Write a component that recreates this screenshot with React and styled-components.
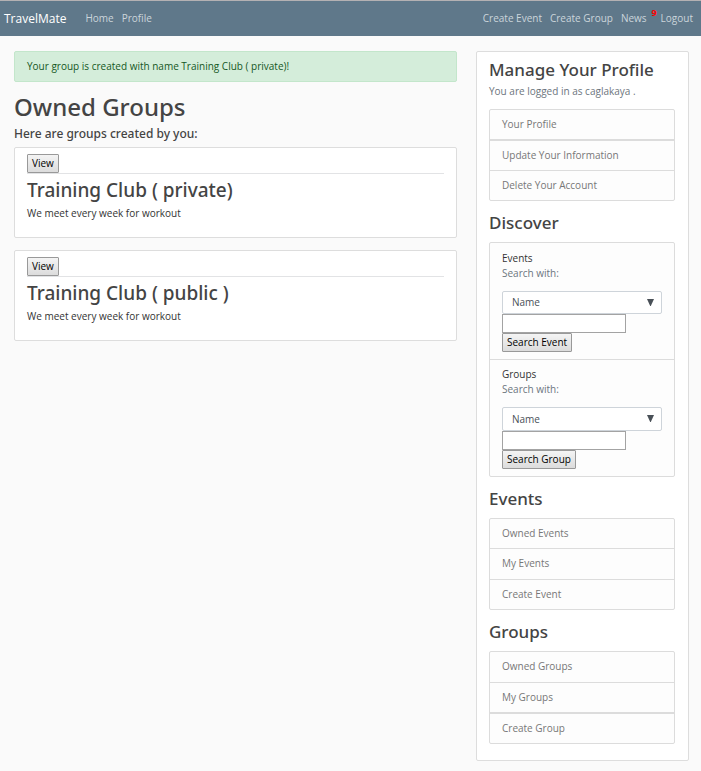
import React from "react";
import styled, { createGlobalStyle } from "styled-components";

const Global = createGlobalStyle`
  *, *::before, *::after { box-sizing: border-box; }
  body {
    margin: 0;
    background: #fafafa;
    color: #333;
    font-family: "Open Sans", "Noto Sans", sans-serif;
    font-size: 10px;
    line-height: 15px;
  }
  h1, h2, h3, p, ul { margin: 0; padding: 0; }
  h1, h2, h3 {
    color: #444;
    font-family: "Noto Sans", "Open Sans", sans-serif;
    font-weight: 500;
  }
  ul { list-style: none; }
  button, input, select { font: inherit; }
`;

const Navbar = styled.nav`
  display: flex;
  align-items: center;
  height: 36px;
  padding: 0 8px 0 4px;
  background: #5f788a;
  border-top: 1px solid #b4b1b3;
`;

const Brand = styled.a`
  margin-right: 19px;
  color: #fff;
  font-size: 12px;
  line-height: 18px;
  text-decoration: none;
`;

const NavGroup = styled.div`
  display: flex;
  gap: 8px;
  margin-left: ${(p) => (p.$end ? "auto" : "0")};
`;

const NavLink = styled.a`
  position: relative;
  color: #cbd5db;
  text-decoration: none;
  margin-right: ${(p) => (p.$badged ? "6px" : "0")};
`;

const Badge = styled.sup`
  position: absolute;
  top: -3px;
  right: -10px;
  color: #f00;
  font-size: 9px;
  font-weight: 700;
  line-height: 10px;
`;

const Page = styled.main`
  display: grid;
  grid-template-columns: minmax(0, 443fr) minmax(0, 213fr);
  gap: 19px;
  align-items: start;
  padding: 15px 12px 10px 14px;
`;

const Alert = styled.div`
  padding: 7px 12px;
  border: 1px solid #c3e6cb;
  border-radius: 2px;
  background: #d4edda;
  color: #155724;
`;

const PageTitle = styled.h1`
  margin-top: 9px;
  font-size: 24px;
  line-height: 32px;
`;

const Lead = styled.h3`
  margin: 3px 0 5px;
  font-size: 12px;
  line-height: 16px;
`;

const Card = styled.article`
  margin-bottom: 12px;
  padding: 6px 12px 16px;
  border: 1px solid #ddd;
  border-radius: 2px;
  background: #fff;
`;

const CardHead = styled.div`
  display: flex;
  border-bottom: 1px solid #e2e3e5;
`;

const Button = styled.button`
  height: 19px;
  padding: 0 4px;
  border: 1px solid #999;
  border-radius: 1px;
  background: linear-gradient(#f4f4f4, #dcdcdc);
  color: #000;
  line-height: 15px;
`;

const CardTitle = styled.h2`
  margin: 4px 0;
  font-size: 19px;
  line-height: 24px;
`;

const Sidebar = styled.aside`
  padding: 7px 13px 16px 12px;
  border: 1px solid #ddd;
  border-radius: 2px;
  background: #fff;
`;

const SideTitle = styled.h2`
  margin-top: ${(p) => (p.$first ? "0" : "11px")};
  margin-bottom: ${(p) => (p.$first ? "4px" : "9px")};
  font-size: 17px;
  line-height: 21px;
`;

const Muted = styled.p`
  color: #6c757d;
`;

const List = styled.ul`
  border: 1px solid #dcdcdc;
  border-radius: 2px;
  background: #fdfdfd;
  margin-top: ${(p) => (p.$spaced ? "10px" : "0")};
`;

const Item = styled.li`
  border-top: ${(p) => (p.$thick ? "2px" : "1px")} solid #dcdcdc;
  &:first-child { border-top: 0; }
`;

const ItemLink = styled.a`
  display: block;
  padding: 7px 12px ${(p) => (p.$tall ? "8px" : "7px")};
  color: #777;
  text-decoration: none;
`;

const SearchForm = styled.form`
  display: flex;
  flex-direction: column;
  align-items: flex-start;
  padding: ${(p) => (p.$tall ? "7px" : "8px")} 12px 7px;
`;

const SearchLabel = styled.label`
  margin-bottom: 10px;
  color: #6c757d;
`;

const SelectWrap = styled.div`
  position: relative;
  width: 100%;
  svg {
    position: absolute;
    right: 7px;
    top: 7px;
    pointer-events: none;
  }
`;

const Select = styled.select`
  appearance: none;
  display: block;
  width: 100%;
  height: ${(p) => (p.$tall ? "24px" : "23px")};
  padding: 0 9px;
  border: 1px solid #ced4da;
  border-radius: 2px;
  background: #fff;
  color: #495057;
`;

const TextInput = styled.input`
  width: 124px;
  max-width: 100%;
  height: 19px;
  padding: 0 3px;
  border: 1px solid #a3a3a3;
  border-radius: 0;
  background: #fff;
`;

function Search({ title, id, action, tall }) {
  return (
    <Item>
      <SearchForm $tall={tall} onSubmit={(e) => e.preventDefault()}>
        <p>{title}</p>
        <SearchLabel htmlFor={id}>Search with:</SearchLabel>
        <SelectWrap>
          <Select id={id} $tall={tall}>
            <option>Name</option>
          </Select>
          <svg width="9" height="9" viewBox="0 0 9 9" aria-hidden="true">
            <path d="M1 1h7L4.8 8h-.6z" fill="#495057" />
          </svg>
        </SelectWrap>
        <TextInput type="text" aria-label={action} />
        <Button type="submit">{action}</Button>
      </SearchForm>
    </Item>
  );
}

function LinkList({ items, spaced }) {
  return (
    <List $spaced={spaced}>
      {items.map((item) => (
        <Item key={item.text} $thick={item.thick}>
          <ItemLink href="#" $tall={item.tall}>{item.text}</ItemLink>
        </Item>
      ))}
    </List>
  );
}

const groups = ["Training Club ( private)", "Training Club ( public )"];

const profileLinks = [
  { text: "Your Profile" },
  { text: "Update Your Information", thick: true },
  { text: "Delete Your Account" },
];

const eventLinks = [
  { text: "Owned Events" },
  { text: "My Events", tall: true },
  { text: "Create Event" },
];

const groupLinks = [
  { text: "Owned Groups", tall: true },
  { text: "My Groups" },
  { text: "Create Group", thick: true },
];

export default function App() {
  return (
    <>
      <Global />
      <Navbar>
        <Brand href="#">TravelMate</Brand>
        <NavGroup>
          <NavLink href="#">Home</NavLink>
          <NavLink href="#">Profile</NavLink>
        </NavGroup>
        <NavGroup $end>
          <NavLink href="#">Create Event</NavLink>
          <NavLink href="#">Create Group</NavLink>
          <NavLink href="#" $badged>News<Badge>9</Badge></NavLink>
          <NavLink href="#">Logout</NavLink>
        </NavGroup>
      </Navbar>
      <Page>
        <section>
          <Alert role="alert">
            Your group is created with name Training Club ( private)!
          </Alert>
          <PageTitle>Owned Groups</PageTitle>
          <Lead>Here are groups created by you:</Lead>
          {groups.map((name) => (
            <Card key={name}>
              <CardHead><Button type="button">View</Button></CardHead>
              <CardTitle>{name}</CardTitle>
              <p>We meet every week for workout</p>
            </Card>
          ))}
        </section>
        <Sidebar>
          <SideTitle $first>Manage Your Profile</SideTitle>
          <Muted>You are logged in as caglakaya .</Muted>
          <LinkList items={profileLinks} spaced />
          <SideTitle>Discover</SideTitle>
          <List>
            <Search title="Events" id="event-field" action="Search Event" />
            <Search title="Groups" id="group-field" action="Search Group" tall />
          </List>
          <SideTitle>Events</SideTitle>
          <LinkList items={eventLinks} />
          <SideTitle>Groups</SideTitle>
          <LinkList items={groupLinks} />
        </Sidebar>
      </Page>
    </>
  );
}
